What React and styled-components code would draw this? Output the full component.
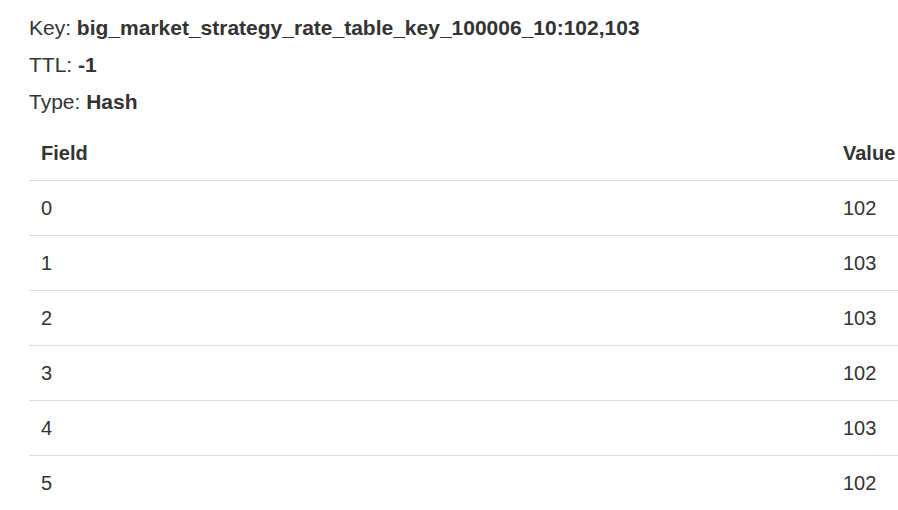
import React from 'react';
import styled, { createGlobalStyle } from 'styled-components';

const GlobalStyle = createGlobalStyle`
  body {
    margin: 0;
    overflow: hidden;
    background: #fff;
    font-family: "Liberation Sans", Arial, sans-serif;
    color: #333;
  }
`;

const Container = styled.div`
  padding: 14px 0 0 29px;
  width: 920px;
`;

const Line = styled.p`
  margin: 0 0 9px;
  font-size: 21px;
  line-height: 28px;
`;

const Table = styled.table`
  width: 100%;
  margin-top: 10px;
  border-collapse: collapse;
  font-size: 20px;
  line-height: 28px;
`;

const Th = styled.th`
  text-align: left;
  font-weight: bold;
  padding: 13px 12px;
  border-bottom: 1px solid #ddd;
  width: ${({ $w }) => $w || 'auto'};
`;

const Td = styled.td`
  padding: 13px 12px;
  border-bottom: ${({ $last }) => ($last ? 'none' : '1px solid #ddd')};
`;

const rows = [
  ['0', '102'],
  ['1', '103'],
  ['2', '103'],
  ['3', '102'],
  ['4', '103'],
  ['5', '102'],
];

export default function App() {
  return (
    <>
      <GlobalStyle />
      <Container>
        <Line>
          Key: <b>big_market_strategy_rate_table_key_100006_10:102,103</b>
        </Line>
        <Line>
          TTL: <b>-1</b>
        </Line>
        <Line>
          Type: <b>Hash</b>
        </Line>
        <Table>
          <thead>
            <tr>
              <Th $w="778px">Field</Th>
              <Th>Value</Th>
            </tr>
          </thead>
          <tbody>
            {rows.map(([f, v], i) => (
              <tr key={f}>
                <Td $last={i === rows.length - 1}>{f}</Td>
                <Td $last={i === rows.length - 1}>{v}</Td>
              </tr>
            ))}
          </tbody>
        </Table>
      </Container>
    </>
  );
}
